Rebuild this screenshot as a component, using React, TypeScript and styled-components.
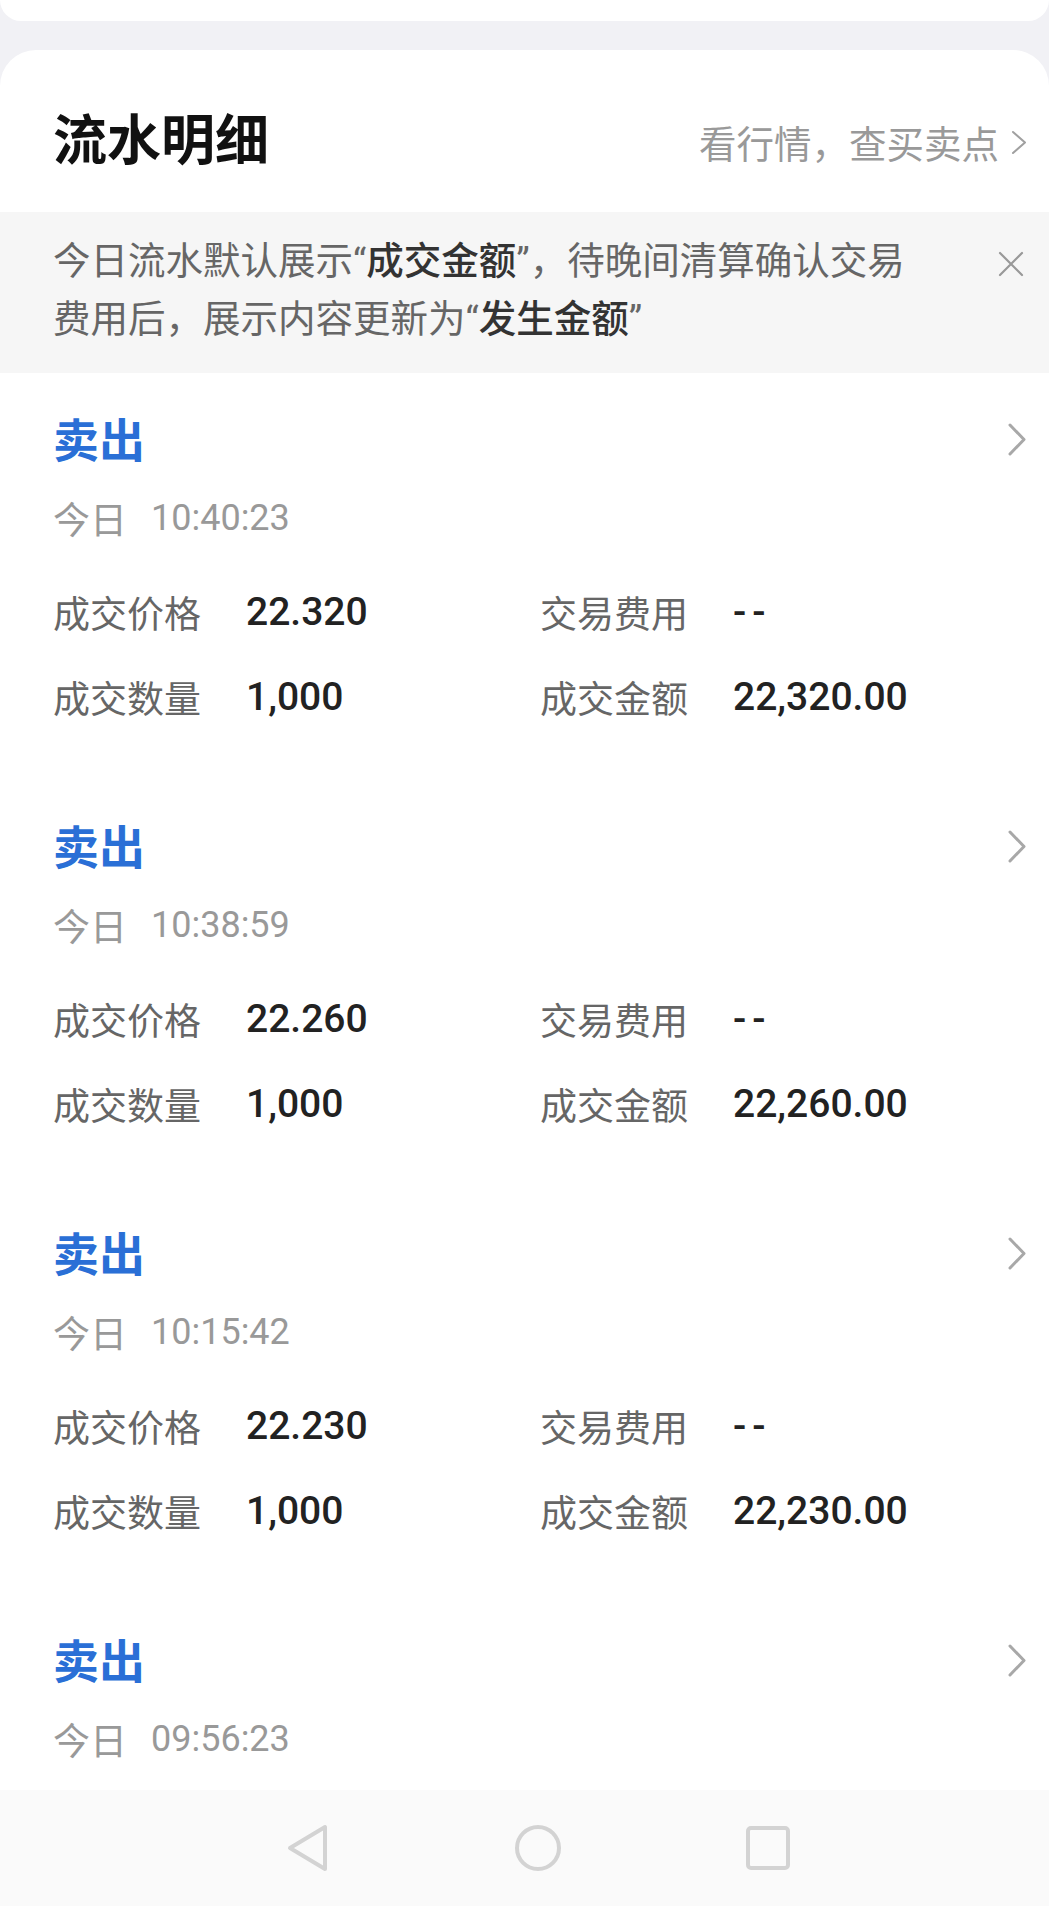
import React from "react";
import styled, { createGlobalStyle } from "styled-components";

const GlobalStyle = createGlobalStyle`
  html, body { margin: 0; padding: 0; }
  body {
    background: #f1f1f5;
    font-family: Roboto, "Noto Sans CJK SC", "Noto Sans", sans-serif;
    -webkit-font-smoothing: antialiased;
  }
`;

const CJK = `"Noto Sans CJK SC", "Noto Sans", sans-serif`;
const NUM = `Roboto, "Noto Sans CJK SC", sans-serif`;

const Screen = styled.div`
  width: 1049px;
  height: 1906px;
  display: flex;
  flex-direction: column;
  background: #f1f1f5;
  overflow: hidden;
`;

const Viewport = styled.div`
  flex: 1;
  min-height: 0;
  overflow: hidden;
  display: flex;
  flex-direction: column;
  gap: 29px;
`;

const TopCard = styled.div`
  height: 21px;
  flex-shrink: 0;
  background: #fff;
  border-radius: 0 0 24px 24px;
`;

const MainCard = styled.section`
  flex-shrink: 0;
  background: #fff;
  border-radius: 36px 36px 0 0;
`;

const Header = styled.div`
  display: flex;
  align-items: center;
  justify-content: space-between;
  padding: 56px 22px 44px 53px;
`;

const Title = styled.h1`
  margin: 0;
  font-family: ${CJK};
  font-size: 54px;
  line-height: 62px;
  font-weight: 700;
  color: #111;
`;

const HeaderLink = styled.a`
  display: flex;
  align-items: center;
  gap: 12px;
  margin-top: 10px;
  font-family: ${CJK};
  font-size: 37.5px;
  line-height: 44px;
  color: #999;
  text-decoration: none;
`;

const Notice = styled.div`
  display: flex;
  align-items: flex-start;
  background: #f6f6f6;
  padding: 20px 22px 25px 53px;
`;

const NoticeText = styled.p`
  margin: 0;
  width: 870px;
  font-family: ${NUM};
  font-size: 37.5px;
  line-height: 58px;
  color: #666;
`;

const Strong = styled.span`
  color: #333;
  font-weight: 500;
`;

const CloseBtn = styled.button`
  margin: 16px 0 0 auto;
  padding: 0;
  border: 0;
  background: none;
  display: flex;
  width: 32px;
  height: 32px;
  align-items: center;
  justify-content: center;
`;

const Item = styled.article`
  padding: 34px 22px 55px 53px;
`;

const ItemHead = styled.div`
  display: flex;
  align-items: center;
  justify-content: space-between;
  height: 60px;
`;

const Side = styled.span`
  font-family: ${CJK};
  font-size: 46px;
  line-height: 60px;
  font-weight: 700;
  color: #2a6fd6;
`;

const Arrow = styled.span`
  display: flex;
  margin-top: 4px;
`;

const TimeRow = styled.div`
  display: flex;
  align-items: center;
  gap: 24px;
  margin-top: 26px;
  height: 50px;
  color: #999;
`;

const Day = styled.span`
  font-family: ${CJK};
  font-size: 37px;
`;

const Clock = styled.span`
  font-family: ${NUM};
  font-size: 36px;
`;

const Grid = styled.div`
  display: grid;
  grid-template-columns: 487px 1fr;
  row-gap: 29px;
  margin-top: 41px;
`;

const Cell = styled.div`
  display: flex;
  align-items: center;
  height: 56px;
`;

const Label = styled.span`
  width: 193px;
  flex-shrink: 0;
  font-family: ${CJK};
  font-size: 37px;
  color: #666;
`;

const Value = styled.span<{ $dash?: boolean }>`
  font-family: ${NUM};
  font-size: 39px;
  font-weight: 500;
  color: #222;
  letter-spacing: ${(p) => (p.$dash ? "6px" : "0")};
`;

const NavBar = styled.nav`
  height: 116px;
  flex-shrink: 0;
  background: #fafafa;
  display: flex;
  align-items: center;
  justify-content: center;
  padding-left: 27px;
`;

const NavSlot = styled.div`
  width: 230px;
  display: flex;
  justify-content: center;
`;

const Chevron = ({ w, h, sw, color }: { w: number; h: number; sw: number; color: string }) => (
  <svg width={w} height={h} viewBox={`0 0 ${w} ${h}`} fill="none">
    <polyline
      points={`${sw},${sw} ${w - sw},${h / 2} ${sw},${h - sw}`}
      stroke={color}
      strokeWidth={sw}
      strokeLinecap="round"
      strokeLinejoin="round"
    />
  </svg>
);

type Trade = { time: string; price: string; qty: string; amount: string };

const trades: Trade[] = [
  { time: "10:40:23", price: "22.320", qty: "1,000", amount: "22,320.00" },
  { time: "10:38:59", price: "22.260", qty: "1,000", amount: "22,260.00" },
  { time: "10:15:42", price: "22.230", qty: "1,000", amount: "22,230.00" },
  { time: "09:56:23", price: "22.230", qty: "1,000", amount: "22,230.00" },
];

export default function App() {
  return (
    <>
      <GlobalStyle />
      <Screen>
        <Viewport>
          <TopCard />
          <MainCard>
            <Header>
              <Title>流水明细</Title>
              <HeaderLink href="#">
                看行情，查买卖点
                <Chevron w={16} h={25} sw={2} color="#a0a0a0" />
              </HeaderLink>
            </Header>
            <Notice>
              <NoticeText>
                今日流水默认展示“<Strong>成交金额</Strong>”，待晚间清算确认交易费用后，展示内容更新为“<Strong>发生金额</Strong>”
              </NoticeText>
              <CloseBtn aria-label="关闭">
                <svg width="26" height="26" viewBox="0 0 26 26">
                  <path d="M2 2 L24 24 M24 2 L2 24" stroke="#999" strokeWidth="2.2" strokeLinecap="round" />
                </svg>
              </CloseBtn>
            </Notice>
            {trades.map((t) => (
              <Item key={t.time}>
                <ItemHead>
                  <Side>卖出</Side>
                  <Arrow>
                    <Chevron w={20} h={35} sw={3} color="#a8a8a8" />
                  </Arrow>
                </ItemHead>
                <TimeRow>
                  <Day>今日</Day>
                  <Clock>{t.time}</Clock>
                </TimeRow>
                <Grid>
                  <Cell>
                    <Label>成交价格</Label>
                    <Value>{t.price}</Value>
                  </Cell>
                  <Cell>
                    <Label>交易费用</Label>
                    <Value $dash>--</Value>
                  </Cell>
                  <Cell>
                    <Label>成交数量</Label>
                    <Value>{t.qty}</Value>
                  </Cell>
                  <Cell>
                    <Label>成交金额</Label>
                    <Value>{t.amount}</Value>
                  </Cell>
                </Grid>
              </Item>
            ))}
          </MainCard>
        </Viewport>
        <NavBar>
          <NavSlot>
            <svg width="44" height="50" viewBox="0 0 44 50" fill="none">
              <path d="M39 4 L39 46 L4 25 Z" stroke="#d3d3d3" strokeWidth="4" strokeLinejoin="round" />
            </svg>
          </NavSlot>
          <NavSlot>
            <svg width="48" height="48" viewBox="0 0 48 48" fill="none">
              <circle cx="24" cy="24" r="21" stroke="#d3d3d3" strokeWidth="4" />
            </svg>
          </NavSlot>
          <NavSlot>
            <svg width="44" height="44" viewBox="0 0 44 44" fill="none">
              <rect x="2" y="2" width="40" height="40" rx="3" stroke="#d3d3d3" strokeWidth="4" />
            </svg>
          </NavSlot>
        </NavBar>
      </Screen>
    </>
  );
}
